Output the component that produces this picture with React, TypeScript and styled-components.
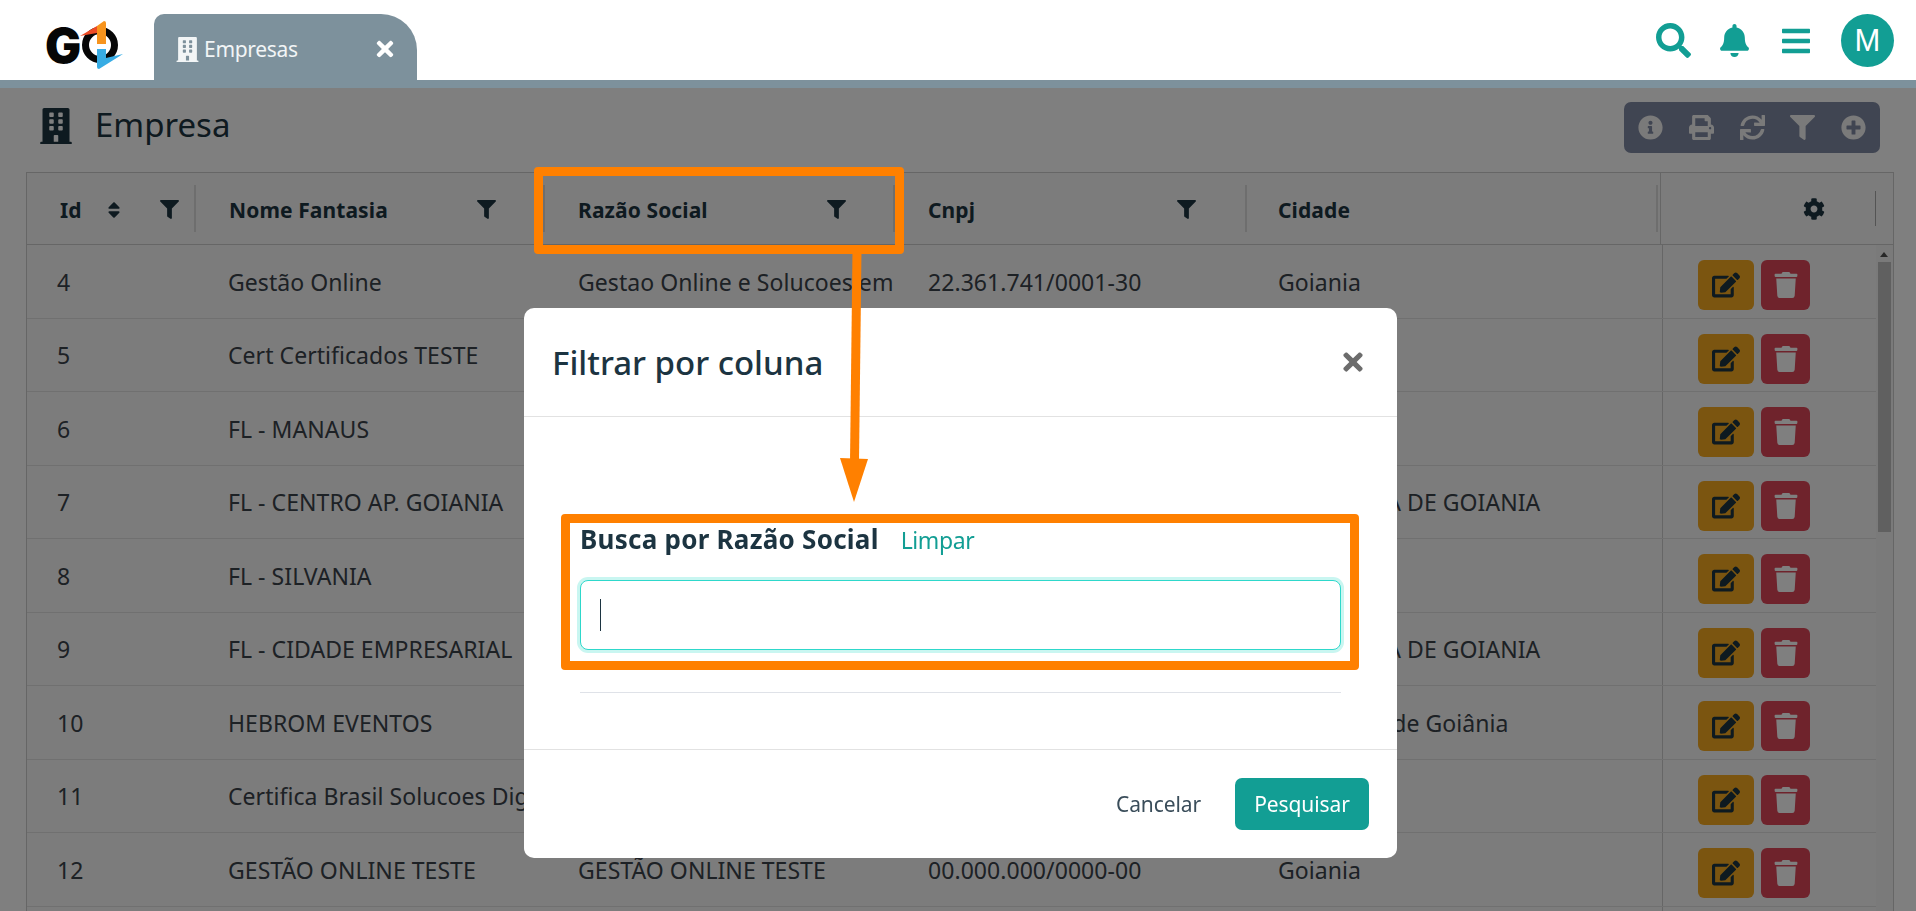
import { createGlobalStyle } from "styled-components";
import styled from "styled-components";
import {
  FaBars,
  FaBell,
  FaBuilding,
  FaCog,
  FaEdit,
  FaFilter,
  FaInfoCircle,
  FaPlusCircle,
  FaPrint,
  FaSearch,
  FaSort,
  FaSync,
  FaTimes,
  FaTrash,
} from "react-icons/fa";

const GlobalStyle = createGlobalStyle`
  html, body {
    margin: 0;
    height: 100%;
    overflow: hidden;
    background: #fff;
    font-family: "Noto Sans", "Open Sans", sans-serif;
    color: #3a424a;
  }
  * { box-sizing: border-box; }
`;

const Page = styled.div`
  height: 911px;
  overflow: hidden;
  display: flex;
  flex-direction: column;
`;

const TopBar = styled.header`
  position: relative;
  z-index: 30;
  height: 88px;
  flex: none;
  display: flex;
  align-items: flex-end;
  padding: 0 22px 0 45px;
  background: #fff;
  border-bottom: 8px solid #7d919c;
`;

const Logo = styled.svg`
  width: 80px;
  height: 50px;
  margin-right: 29px;
  align-self: flex-start;
  margin-top: 20px;
  overflow: visible;
`;

const Tab = styled.div`
  width: 263px;
  height: 66px;
  display: flex;
  align-items: center;
  padding: 4px 20px 0 21px;
  background: #7d919c;
  border-radius: 10px 36px 0 0;
  color: #f2f5f6;
  font-size: 21px;
  svg { flex: none; }
`;

const TabLabel = styled.span`
  margin-left: 4px;
  flex: 1;
  letter-spacing: -0.3px;
`;

const TopIcons = styled.div`
  margin-left: auto;
  align-self: flex-start;
  display: flex;
  align-items: center;
  color: #129e94;
  height: 53px;
  margin-top: 14px;
`;

const TopIcon = styled.span<{ $gap: number }>`
  display: flex;
  margin-left: ${({ $gap }) => $gap}px;
`;

const Avatar = styled.div`
  width: 53px;
  height: 53px;
  margin-left: 29px;
  border-radius: 50%;
  background: #129e94;
  color: #fff;
  font: 400 31px "Liberation Sans", sans-serif;
  display: flex;
  align-items: center;
  justify-content: center;
`;

const Content = styled.main`
  flex: 1;
  min-height: 0;
  padding: 14px 22px 0 26px;
`;

const TitleRow = styled.div`
  height: 70px;
  display: flex;
  align-items: flex-start;
`;

const PageTitle = styled.h1`
  margin: 0;
  display: flex;
  align-items: center;
  height: 44px;
  margin-top: 0;
  font-size: 33px;
  font-weight: 400;
  color: #1c3441;
  svg {
    margin: 4px 21px 0 12px;
  }
`;

const Toolbar = styled.div`
  margin-left: auto;
  margin-right: 14px;
  width: 256px;
  height: 51px;
  display: flex;
  align-items: center;
  justify-content: space-between;
  padding: 0 14px;
  background: #808aa4;
  border-radius: 7px;
  color: #f4f4f4;
  svg {
    width: 25px;
    height: 25px;
  }
`;

const Table = styled.section`
  border: 1px solid #cdcdcd;
  border-bottom: 0;
  background: #f8f8f8;
  height: 739px;
  overflow: hidden;
`;

const HeadRow = styled.div`
  height: 72px;
  display: grid;
  grid-template-columns: 169px 349px 350px 352px 411px 1fr;
  border-bottom: 1px solid #cdcdcd;
  color: #1c3441;
  font-size: 21px;
  font-weight: 700;
`;

const HeadCell = styled.div<{ $start?: number; $end?: number }>`
  margin: 12px 0;
  padding: 2px ${({ $end }) => $end ?? 47}px 0 ${({ $start }) => $start ?? 33}px;
  display: flex;
  align-items: center;
  border-right: 2px solid #dcdcdc;
  svg {
    flex: none;
  }
`;

const HeadLabel = styled.span`
  flex: 1;
  letter-spacing: 0.1px;
`;

const SortIcon = styled.span`
  display: flex;
  margin-right: 36px;
  margin-left: -22px;
`;

const GearCell = styled.div`
  border-left: 1px solid #cdcdcd;
  margin-left: 2px;
  display: flex;
  align-items: center;
  justify-content: flex-end;
`;

const GearDivider = styled.span`
  width: 1px;
  height: 35px;
  margin-left: 50px;
  margin-right: 17px;
  background: #a8a8a8;
`;

const Body = styled.div`
  display: flex;
`;

const Rows = styled.div`
  flex: 1;
  min-width: 0;
`;

const Row = styled.div`
  height: 73.5px;
  display: grid;
  grid-template-columns: 169px 350px 350px 350px 416px 1fr;
  align-items: stretch;
  border-bottom: 1px solid #e0e0e0;
  font-size: 23px;
`;

const Cell = styled.div`
  padding-left: 32px;
  padding-top: 1px;
  display: flex;
  align-items: center;
  white-space: nowrap;
  letter-spacing: 0.05px;
  &:first-child {
    padding-left: 30px;
  }
`;

const Actions = styled.div`
  border-left: 1px solid #cdcdcd;
  padding: 15px 0 0 35px;
  display: flex;
  gap: 7px;
`;

const ActionButton = styled.button<{ $bg: string; $wide?: boolean; $color: string }>`
  width: ${({ $wide }) => ($wide ? 56 : 49)}px;
  height: 50px;
  padding: 0;
  border: 0;
  border-radius: 6px;
  display: flex;
  align-items: center;
  justify-content: center;
  background: ${({ $bg }) => $bg};
  color: ${({ $color }) => $color};
`;

const ScrollTrack = styled.div`
  width: 17px;
  flex: none;
  position: relative;
  background: #f5f5f5;
  padding-top: 17px;
`;

const ScrollArrow = styled.span`
  position: absolute;
  top: 7px;
  left: 4px;
  border: 4px solid transparent;
  border-top: 0;
  border-bottom: 5px solid #505050;
  border-left-width: 4.5px;
  border-right-width: 4.5px;
`;

const ScrollThumb = styled.div`
  width: 13px;
  margin-left: 2px;
  height: 270px;
  background: #c1c1c1;
`;

const Overlay = styled.div`
  position: fixed;
  inset: 88px 0 0 0;
  z-index: 10;
  background: rgba(0, 0, 0, 0.5);
  display: flex;
  justify-content: center;
  align-items: flex-start;
  padding: 220px 0 0 5px;
`;

const Modal = styled.div`
  width: 873px;
  height: 550px;
  background: #fff;
  border-radius: 10px;
  display: flex;
  flex-direction: column;
`;

const ModalHeader = styled.div`
  height: 109px;
  flex: none;
  display: flex;
  align-items: center;
  padding: 0 30px 0 28px;
  border-bottom: 1px solid #e2e2e2;
  color: #6c6c6c;
`;

const ModalTitle = styled.h2`
  margin: 0 auto 0 0;
  font-size: 33px;
  font-weight: 500;
  color: #1c3441;
`;

const ModalBody = styled.div`
  flex: 1;
  padding: 104px 56px 0;
`;

const FieldHead = styled.div`
  display: flex;
  align-items: baseline;
  gap: 22px;
  height: 59px;
`;

const FieldLabel = styled.label`
  font-size: 26px;
  font-weight: 700;
  color: #1c3441;
  letter-spacing: 0.25px;
`;

const ClearLink = styled.a`
  font-size: 23px;
  color: #129e94;
  letter-spacing: -0.4px;
`;

const FieldBox = styled.div`
  height: 70px;
  display: flex;
  align-items: center;
  padding-left: 19px;
  border: 1px solid #2ed8cb;
  border-radius: 8px;
  box-shadow: 0 0 0 3px #c9f6f1;
  background: #fff;
`;

const Caret = styled.span`
  width: 1px;
  height: 32px;
  background: #1c3441;
`;

const FieldRule = styled.div`
  height: 1px;
  margin-top: 42px;
  background: #dfe2e8;
`;

const ModalFooter = styled.div`
  height: 109px;
  flex: none;
  display: flex;
  align-items: center;
  justify-content: flex-end;
  gap: 34px;
  padding: 0 28px;
  border-top: 1px solid #e2e2e2;
  font-size: 21px;
  letter-spacing: -0.1px;
`;

const CancelButton = styled.span`
  color: #3a4d5a;
`;

const SearchButton = styled.button`
  width: 134px;
  height: 52px;
  border: 0;
  border-radius: 7px;
  background: #129e94;
  color: #fff;
  font: inherit;
  letter-spacing: inherit;
`;

const Callout = styled.div<{ $x: number; $y: number; $w: number; $h: number }>`
  position: fixed;
  z-index: 20;
  left: ${({ $x }) => $x}px;
  top: ${({ $y }) => $y}px;
  width: ${({ $w }) => $w}px;
  height: ${({ $h }) => $h}px;
  border: 9px solid #ff8000;
  border-radius: 4px;
`;

const CalloutArrow = styled.svg`
  position: fixed;
  z-index: 20;
  left: 830px;
  top: 250px;
`;

const rows = [
  { id: "4", name: "Gestão Online", social: "Gestao Online e Solucoes em", cnpj: "22.361.741/0001-30", city: "Goiania" },
  { id: "5", name: "Cert Certificados TESTE", social: "", cnpj: "", city: "" },
  { id: "6", name: "FL - MANAUS", social: "", cnpj: "", city: "" },
  { id: "7", name: "FL - CENTRO AP. GOIANIA", social: "", cnpj: "", city: "APARECIDA DE GOIANIA" },
  { id: "8", name: "FL - SILVANIA", social: "", cnpj: "", city: "" },
  { id: "9", name: "FL - CIDADE EMPRESARIAL", social: "", cnpj: "", city: "APARECIDA DE GOIANIA" },
  { id: "10", name: "HEBROM EVENTOS", social: "", cnpj: "", city: "Aparecida de Goiânia" },
  { id: "11", name: "Certifica Brasil Solucoes Digitais", social: "", cnpj: "", city: "" },
  { id: "12", name: "GESTÃO ONLINE TESTE", social: "GESTÃO ONLINE TESTE", cnpj: "00.000.000/0000-00", city: "Goiania" },
  { id: "", name: "", social: "", cnpj: "", city: "" },
];

function GoLogo() {
  return (
    <Logo viewBox="0 0 80 50">
      <text x="0" y="43" fontFamily="Inter, sans-serif" fontWeight="900" fontSize="48" fill="#060606">
        G
      </text>
      <circle cx="55" cy="25" r="14.5" fill="none" stroke="#060606" strokeWidth="7" />
      <path d="M35 16 L52 6 L52 13 Z" fill="#ee4b25" />
      <path d="M52 6 L59 1 Q61 1 61 3 L61 24 L52 24 Z" fill="#f7941d" />
      <path d="M52 29 L61 29 L61 38 L78 34 L54 49 Q52 49 52 47 Z" fill="#37ace4" />
    </Logo>
  );
}

export default function App() {
  return (
    <Page>
      <GlobalStyle />
      <TopBar>
        <GoLogo />
        <Tab>
          <FaBuilding size={25} />
          <TabLabel>Empresas</TabLabel>
          <FaTimes size={24} color="#fff" />
        </Tab>
        <TopIcons>
          <TopIcon $gap={0}>
            <FaSearch size={35} />
          </TopIcon>
          <TopIcon $gap={27}>
            <FaBell size={33} />
          </TopIcon>
          <TopIcon $gap={29}>
            <FaBars size={32} />
          </TopIcon>
          <Avatar>M</Avatar>
        </TopIcons>
      </TopBar>

      <Content>
        <TitleRow>
          <PageTitle>
            <FaBuilding size={36} />
            Empresa
          </PageTitle>
          <Toolbar>
            <FaInfoCircle />
            <FaPrint />
            <FaSync />
            <FaFilter />
            <FaPlusCircle />
          </Toolbar>
        </TitleRow>

        <Table>
          <HeadRow>
            <HeadCell $end={15}>
              <HeadLabel>Id</HeadLabel>
              <SortIcon>
                <FaSort size={20} />
              </SortIcon>
              <FaFilter size={19} />
            </HeadCell>
            <HeadCell>
              <HeadLabel>Nome Fantasia</HeadLabel>
              <FaFilter size={19} />
            </HeadCell>
            <HeadCell>
              <HeadLabel>Razão Social</HeadLabel>
              <FaFilter size={19} />
            </HeadCell>
            <HeadCell $end={49}>
              <HeadLabel>Cnpj</HeadLabel>
              <FaFilter size={19} />
            </HeadCell>
            <HeadCell $start={31}>
              <HeadLabel>Cidade</HeadLabel>
            </HeadCell>
            <GearCell>
              <FaCog size={22} />
              <GearDivider />
            </GearCell>
          </HeadRow>
          <Body>
            <Rows>
              {rows.map((row, i) => (
                <Row key={i}>
                  <Cell>{row.id}</Cell>
                  <Cell>{row.name}</Cell>
                  <Cell>{row.social}</Cell>
                  <Cell>{row.cnpj}</Cell>
                  <Cell>{row.city}</Cell>
                  <Actions>
                    <ActionButton $bg="#f6aa20" $color="#1c3441" $wide>
                      <FaEdit size={28} />
                    </ActionButton>
                    <ActionButton $bg="#de4659" $color="#fff">
                      <FaTrash size={26} />
                    </ActionButton>
                  </Actions>
                </Row>
              ))}
            </Rows>
            <ScrollTrack>
              <ScrollArrow />
              <ScrollThumb />
            </ScrollTrack>
          </Body>
        </Table>
      </Content>

      <Overlay>
        <Modal>
          <ModalHeader>
            <ModalTitle>Filtrar por coluna</ModalTitle>
            <FaTimes size={28} />
          </ModalHeader>
          <ModalBody>
            <FieldHead>
              <FieldLabel>Busca por Razão Social</FieldLabel>
              <ClearLink>Limpar</ClearLink>
            </FieldHead>
            <FieldBox>
              <Caret />
            </FieldBox>
            <FieldRule />
          </ModalBody>
          <ModalFooter>
            <CancelButton>Cancelar</CancelButton>
            <SearchButton>Pesquisar</SearchButton>
          </ModalFooter>
        </Modal>
      </Overlay>

      <Callout $x={534} $y={167} $w={370} $h={87} />
      <Callout $x={561} $y={514} $w={798} $h={156} />
      <CalloutArrow width="50" height="256" viewBox="0 0 50 256">
        <path d="M27 0 L24.5 212" stroke="#ff8000" strokeWidth="9" fill="none" />
        <path d="M10 208 L38 209 L24 252 Z" fill="#ff8000" />
      </CalloutArrow>
    </Page>
  );
}
